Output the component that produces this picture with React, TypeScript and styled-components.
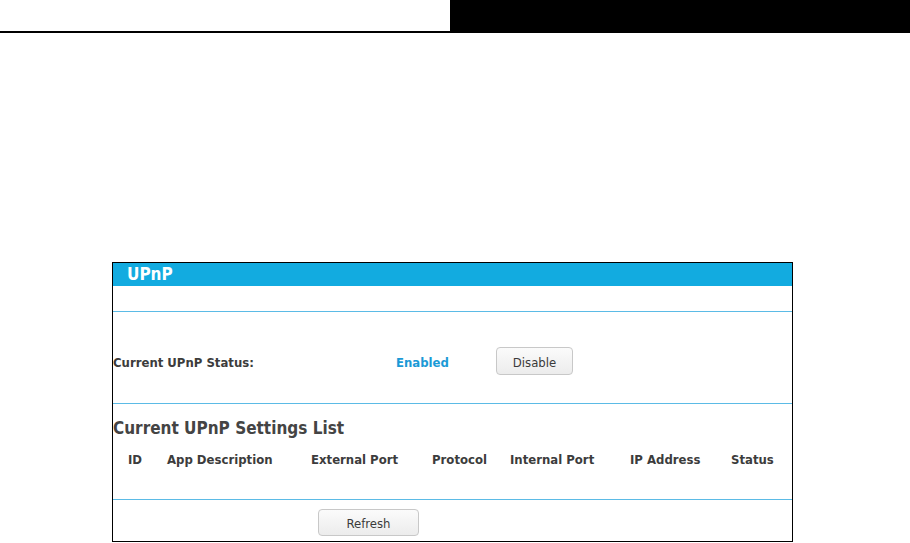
import React from "react";
import styled, { createGlobalStyle } from "styled-components";

const Global = createGlobalStyle`
  html, body { margin: 0; padding: 0; background: #fff; }
  body { font-family: "DejaVu Sans Condensed", "DejaVu Sans", Tahoma, sans-serif; font-stretch: condensed; }
`;

const Page = styled.div`
  width: 910px;
  height: 543px;
  overflow: hidden;
  display: flex;
  flex-direction: column;
`;

const TopBar = styled.div`
  display: flex;
  height: 33px;
`;

const TopLeft = styled.div`
  width: 450px;
  border-bottom: 2px solid #000;
  box-sizing: border-box;
`;

const TopRight = styled.div`
  flex: 1;
  background: #000;
`;

const Panel = styled.div`
  margin: 229px 0 0 112px;
  width: 681px;
  height: 280px;
  box-sizing: border-box;
  border: 1px solid #000;
  display: flex;
  flex-direction: column;
  font-stretch: condensed;
`;

const Header = styled.div`
  height: 23px;
  background: #12abe0;
  color: #fff;
  font-weight: bold;
  font-size: 17px;
  line-height: 23px;
  padding-left: 14px;
`;

const Section = styled.div<{ $h: number }>`
  height: ${(p) => p.$h}px;
  border-bottom: 1px solid #5bbbe6;
  box-sizing: border-box;
`;

const StatusRow = styled.div`
  display: grid;
  grid-template-columns: 283px 100px auto;
  align-items: center;
  padding-top: 35px;
`;

const Label = styled.div`
  font-size: 13px;
  font-weight: bold;
  color: #3c3c3c;
  padding-top: 2px;
`;

const Enabled = styled.div`
  font-size: 13px;
  font-weight: bold;
  color: #1b9ad6;
  padding-top: 2px;
`;

const Button = styled.button<{ $w: number; $h: number }>`
  width: ${(p) => p.$w}px;
  height: ${(p) => p.$h}px;
  font-family: inherit;
  font-stretch: condensed;
  font-size: 13px;
  color: #3a3a3a;
  border: 1px solid #c8c8c8;
  border-radius: 4px;
  background: linear-gradient(#fbfbfb, #ececec);
  padding: 2px 0 0;
  box-sizing: border-box;
`;

const ListTitle = styled.div`
  font-size: 17px;
  font-weight: bold;
  color: #444;
  padding-top: 13px;
  line-height: 22px;
`;

const ColHeaders = styled.div`
  display: grid;
  grid-template-columns: 39px 144px 121px 78px 120px 101px auto;
  padding-left: 15px;
  margin-top: 13px;
  font-size: 13px;
  font-weight: bold;
  color: #3c3c3c;
`;

const FooterRow = styled.div`
  display: flex;
  padding: 9px 0 0 205px;
`;

const cols = ["ID", "App Description", "External Port", "Protocol", "Internal Port", "IP Address", "Status"];

export default function App() {
  return (
    <Page>
      <Global />
      <TopBar>
        <TopLeft />
        <TopRight />
      </TopBar>
      <Panel>
        <Header>UPnP</Header>
        <Section $h={26} />
        <Section $h={92}>
          <StatusRow>
            <Label>Current UPnP Status:</Label>
            <Enabled>Enabled</Enabled>
            <Button $w={77} $h={28}>Disable</Button>
          </StatusRow>
        </Section>
        <Section $h={96}>
          <ListTitle>Current UPnP Settings List</ListTitle>
          <ColHeaders>
            {cols.map((c) => (
              <div key={c}>{c}</div>
            ))}
          </ColHeaders>
        </Section>
        <FooterRow>
          <Button $w={101} $h={27}>Refresh</Button>
        </FooterRow>
      </Panel>
    </Page>
  );
}
